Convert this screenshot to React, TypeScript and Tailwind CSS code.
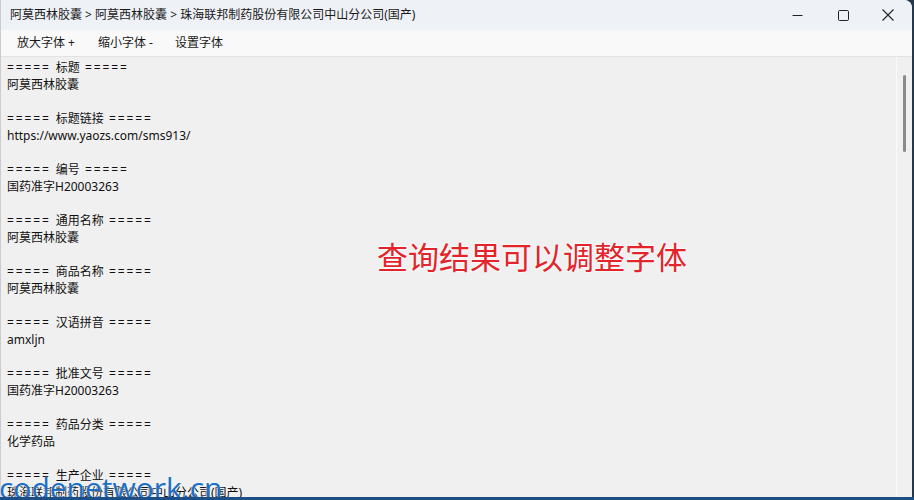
import React from "react";

type Line = { head?: string; text?: string };

const lines: Line[] = [
  { head: "标题" },
  { text: "阿莫西林胶囊" },
  { text: "" },
  { head: "标题链接" },
  { text: "https://www.yaozs.com/sms913/" },
  { text: "" },
  { head: "编号" },
  { text: "国药准字H20003263" },
  { text: "" },
  { head: "通用名称" },
  { text: "阿莫西林胶囊" },
  { text: "" },
  { head: "商品名称" },
  { text: "阿莫西林胶囊" },
  { text: "" },
  { head: "汉语拼音" },
  { text: "amxljn" },
  { text: "" },
  { head: "批准文号" },
  { text: "国药准字H20003263" },
  { text: "" },
  { head: "药品分类" },
  { text: "化学药品" },
  { text: "" },
  { head: "生产企业" },
  { text: "珠海联邦制药股份有限公司中山分公司(国产)" },
];

const font = '"Noto Sans", "Noto Sans CJK SC", sans-serif';

export default function App() {
  return (
    <div className="relative h-[500px] w-[914px] overflow-hidden bg-[#27384a]" style={{ fontFamily: font }}>
      <div className="flex h-[500px] w-[912px] flex-col overflow-hidden rounded-tr-[8px] border-l border-[#c9ccd1] bg-[#f0f0f0]">
        {/* Title bar */}
        <div className="flex h-[30px] shrink-0 items-center bg-[#eef1f6]">
          <div className="flex-1 pl-[9px] text-[12px] text-[#1a1a1a]">
            阿莫西林胶囊 &gt; 阿莫西林胶囊 &gt; 珠海联邦制药股份有限公司中山分公司(国产)
          </div>
          <div className="flex h-full items-center pr-[2px]">
            <div className="flex h-full w-[46px] items-center justify-center">
              <svg width="11" height="11" viewBox="0 0 11 11">
                <line x1="0.5" y1="5.5" x2="10.5" y2="5.5" stroke="#222" strokeWidth="1" />
              </svg>
            </div>
            <div className="flex h-full w-[46px] items-center justify-center">
              <svg width="11" height="11" viewBox="0 0 11 11">
                <rect x="0.5" y="0.5" width="10" height="10" rx="1.2" fill="none" stroke="#222" strokeWidth="1" />
              </svg>
            </div>
            <div className="flex h-full w-[44px] items-center justify-center">
              <svg width="12" height="12" viewBox="0 0 12 12">
                <path d="M0.5 0.5 L11.5 11.5 M11.5 0.5 L0.5 11.5" stroke="#222" strokeWidth="1.1" />
              </svg>
            </div>
          </div>
        </div>
        {/* Menu bar */}
        <div className="flex h-[27px] shrink-0 items-center border-b border-[#e3e3e3] bg-[#f9f9f9] pl-[16px] text-[12px] text-[#1a1a1a]">
          <span className="w-[81px]">放大字体 +</span>
          <span className="w-[77px]">缩小字体 -</span>
          <span>设置字体</span>
        </div>
        {/* Content */}
        <div className="flex min-h-0 flex-1">
          <div className="flex-1 pl-[6px] pt-[2px] text-[12px] leading-[17px] text-[#111]">
            {lines.map((l, i) => (
              <div key={i} className="h-[17px] whitespace-pre">
                {l.head !== undefined ? (
                  <>
                    <span className="tracking-[1.9px]">===== </span>
                    {l.head}
                    <span className="tracking-[1.9px]"> =====</span>
                  </>
                ) : (
                  l.text
                )}
              </div>
            ))}
          </div>
          <div className="flex w-[16px] justify-center border-l border-[#fafafa] pt-[18px]">
            <div className="h-[77px] w-[3px] rounded-full bg-[#8a8a8a]" />
          </div>
        </div>
      </div>

      {/* Red overlay caption */}
      <div
        className="absolute left-[377px] top-[236px] text-[31px] leading-[40px] text-[#e3242b]"
        style={{
          fontFamily: '"Noto Sans CJK SC", sans-serif',
          textShadow: "0 0 2px #fff, 0 0 2px #fff, 0 0 3px #fff",
        }}
      >
        查询结果可以调整字体
      </div>

      {/* Watermark */}
      <div
        className="absolute left-[-1px] top-[468px] text-[30px] font-medium leading-[40px] text-[#1c6fc4]"
        style={{ fontFamily: '"Open Sans", sans-serif', textShadow: "0 0 2px #fff" }}
      >
        codenetwork.cn
      </div>
      <div className="absolute bottom-0 left-0 h-[3px] w-[914px] bg-[#1d4f86]" />
    </div>
  );
}
